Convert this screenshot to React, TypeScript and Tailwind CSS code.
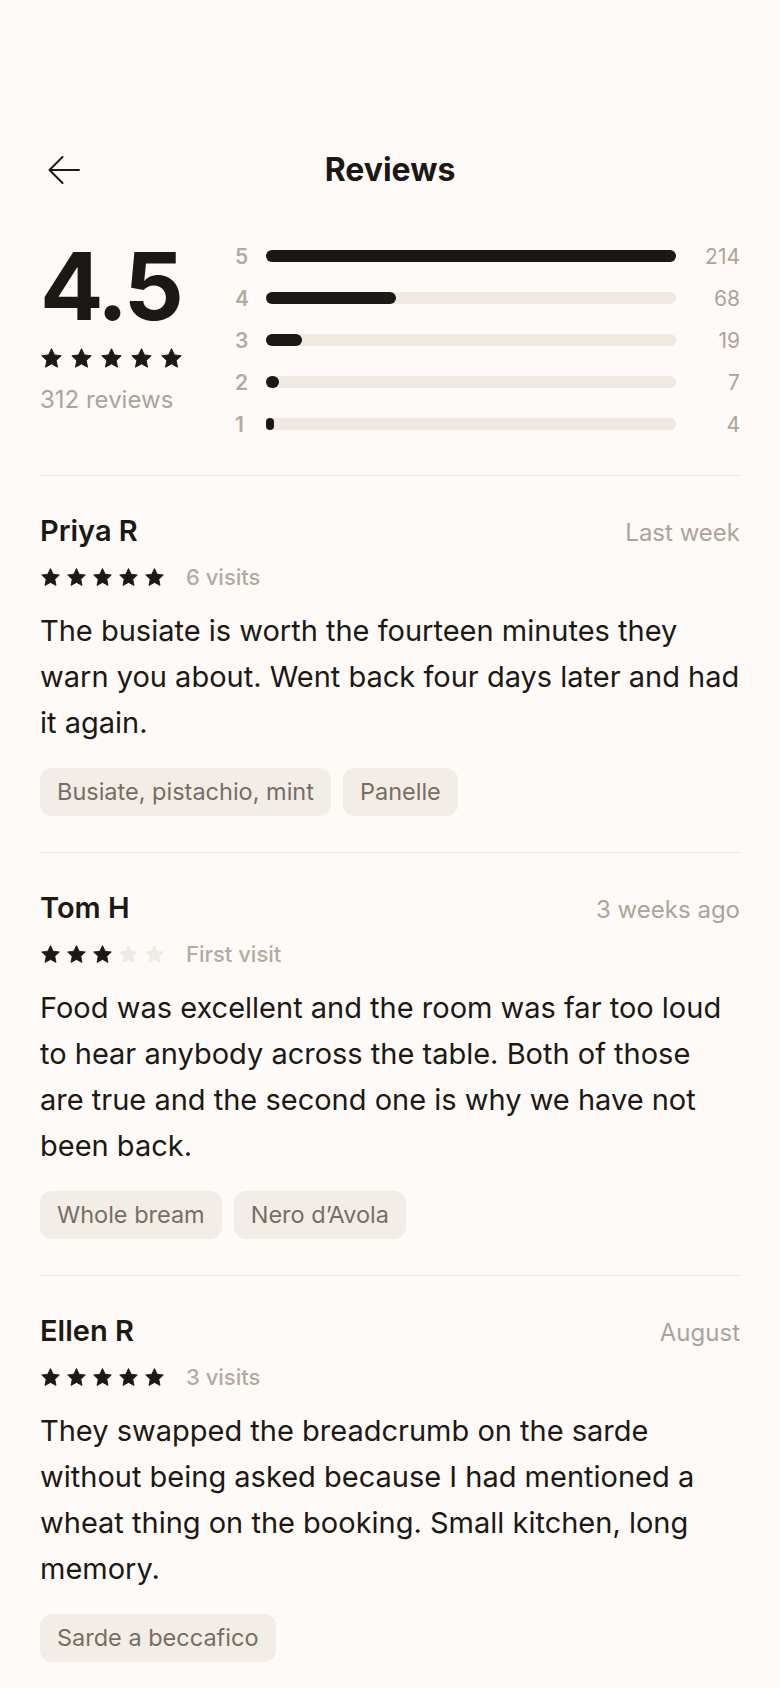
const BREAKDOWN = [
  { stars: 5, count: 214 },
  { stars: 4, count: 68 },
  { stars: 3, count: 19 },
  { stars: 2, count: 7 },
  { stars: 1, count: 4 },
];

const REVIEWS = [
  {
    name: "Priya R",
    when: "Last week",
    rating: 5,
    visits: "6 visits",
    body: "The busiate is worth the fourteen minutes they warn you about. Went back four days later and had it again.",
    tags: ["Busiate, pistachio, mint", "Panelle"],
  },
  {
    name: "Tom H",
    when: "3 weeks ago",
    rating: 3,
    visits: "First visit",
    body: "Food was excellent and the room was far too loud to hear anybody across the table. Both of those are true and the second one is why we have not been back.",
    tags: ["Whole bream", "Nero d\u2019Avola"],
  },
  {
    name: "Ellen R",
    when: "August",
    rating: 5,
    visits: "3 visits",
    body: "They swapped the breadcrumb on the sarde without being asked because I had mentioned a wheat thing on the booking. Small kitchen, long memory.",
    tags: ["Sarde a beccafico"],
  },
];

function Star({ filled, size }: { filled: boolean; size: number }) {
  const color = filled ? "#1c1814" : "#efebe4";
  return (
    <svg width={size} height={size} viewBox="0 0 24 24" aria-hidden="true">
      <path
        d="M12 1.8l3.05 6.45 7.05.9-5.2 4.9 1.35 7L12 17.6l-6.25 3.45 1.35-7-5.2-4.9 7.05-.9z"
        fill={color}
        stroke={color}
        strokeWidth="1"
        strokeLinejoin="round"
      />
    </svg>
  );
}

export default function App() {
  const max = Math.max(...BREAKDOWN.map((b) => b.count));

  return (
    <div className="min-h-screen bg-[#fdfaf7] font-['Inter',sans-serif] text-[#1c1814]">
      <div className="px-10 pt-[142px]">
        {/* Header */}
        <div className="grid h-14 grid-cols-[64px_1fr_64px] items-center">
          <button className="ml-2 flex h-10 w-10 items-center text-[#1c1814]">
            <svg width="32" height="28" viewBox="0 0 32 28" fill="none" stroke="currentColor" strokeWidth="2" strokeLinecap="round" strokeLinejoin="round">
              <path d="M31 14H1.5M14.5 1L1.5 14l13 13" />
            </svg>
          </button>
          <h1 className="text-center text-[32px] font-bold">Reviews</h1>
          <div />
        </div>

        {/* Summary */}
        <div className="mt-[37px] flex pb-[30px]">
          <div className="w-[193px] pt-1">
            <div className="text-[94px] font-bold leading-none tracking-[-0.04em]">4.5</div>
            <div className="mt-[14px] flex gap-[7px]">
              {[0, 1, 2, 3, 4].map((i) => (
                <Star key={i} filled size={23} />
              ))}
            </div>
            <p className="mt-[16px] text-[24px] leading-7 text-[#aca49c]">312 reviews</p>
          </div>

          <div className="flex-1">
            {BREAKDOWN.map((b) => (
              <div key={b.stars} className="flex h-[42px] items-center">
                <span className="w-[33px] pl-[2px] text-[21px] font-semibold leading-none text-[#b3aba2]">{b.stars}</span>
                <div className="h-3 flex-1 rounded-full bg-[#efe9e2]">
                  <div
                    className="h-3 rounded-full bg-[#1c1814]"
                    style={{ width: `${(b.count / max) * 100}%`, minWidth: 8 }}
                  />
                </div>
                <span className="w-16 text-right text-[21px] leading-none text-[#aca49c]">{b.count}</span>
              </div>
            ))}
          </div>
        </div>

        {/* Reviews */}
        {REVIEWS.map((r) => (
          <div key={r.name} className="border-t border-[#ebe6df] pt-[37px] pb-9">
            <div className="flex items-baseline justify-between">
              <h2 className="text-[29px] font-semibold leading-9">{r.name}</h2>
              <span className="text-[24px] text-[#aca49c]">{r.when}</span>
            </div>
            <div className="mt-[14px] flex h-6 items-center">
              <div className="flex gap-[5px]">
                {[1, 2, 3, 4, 5].map((i) => (
                  <Star key={i} filled={i <= r.rating} size={21} />
                ))}
              </div>
              <span className="ml-[21px] text-[22px] font-medium text-[#b3aba2]">{r.visits}</span>
            </div>
            <p className="-mr-[1px] mt-[19px] text-[29px] leading-[46px] text-[#1c1814]">{r.body}</p>
            <div className="mt-[22px] flex flex-wrap gap-3">
              {r.tags.map((t) => (
                <span key={t} className="flex h-12 items-center rounded-[12px] bg-[#f3ede8] px-[17px] text-[23.5px] text-[#776d64]">
                  {t}
                </span>
              ))}
            </div>
          </div>
        ))}
      </div>
    </div>
  );
}
